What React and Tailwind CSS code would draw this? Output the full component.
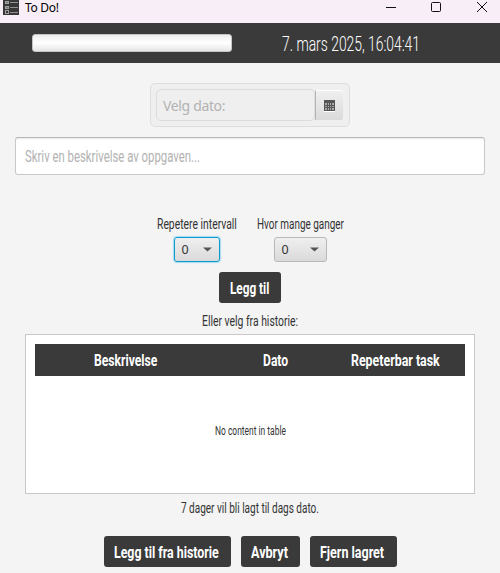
import { useLayoutEffect, useRef, useState } from 'react';

// Single line of narrow lettering, condensed horizontally to the given width.
function Narrow({ width, className = '', children }) {
  const ref = useRef(null);
  const [scale, setScale] = useState(1);
  useLayoutEffect(() => {
    const natural = ref.current.offsetWidth;
    if (natural) setScale(width / natural);
  }, [width, children]);
  return (
    <span className="-mb-px flex shrink-0 pt-px whitespace-nowrap" style={{ width }}>
      <span
        ref={ref}
        className={`block shrink-0 origin-left font-['Roboto',sans-serif] ${className}`}
        style={{ transform: `scaleX(${scale})` }}
      >
        {children}
      </span>
    </span>
  );
}

function DarkButton({ className, width, children }) {
  return (
    <button className={`flex h-[31px] items-center rounded-[3px] bg-[#3a3a3a] pl-[10.5px] text-white ${className}`}>
      <Narrow width={width} className="text-[16px] leading-[31px] font-bold">{children}</Narrow>
    </button>
  );
}

function Combo({ className }) {
  return (
    <div className={`flex items-center justify-between rounded-[3px] border bg-linear-to-b from-[#efefef] to-[#dadada] pr-[7px] pl-[7px] ${className}`}>
      <span className="pt-px font-['Noto_Sans',sans-serif] text-[12.5px] leading-none text-[#333]">0</span>
      <svg width="9" height="5" viewBox="0 0 9 5">
        <path d="M0 0.5H9L4.5 4.5Z" fill="#555" />
      </svg>
    </div>
  );
}

function AppIcon() {
  return (
    <svg width="16" height="16" viewBox="0 0 16 16" className="-mt-px">
      <rect width="16" height="16" fill="#383838" />
      <g fill="none" stroke="#a0a0a0">
        <rect x="2.5" y="2.5" width="3" height="2" fill="#777" />
        <rect x="2.5" y="7.5" width="3" height="2" fill="#777" />
        <rect x="2.5" y="11.5" width="3" height="3" />
        <path d="M7 3.5H15M7 8.5H15M7 13.5H15" stroke="#929292" />
      </g>
    </svg>
  );
}

function CalendarIcon() {
  return (
    <svg width="11" height="12" viewBox="0 0 11 12" shapeRendering="crispEdges">
      <rect width="11" height="11" fill="#555" />
      <rect y="11" width="11" height="1" fill="#fff" />
      <path d="M1 3h2v2h-2zM4 3h1v2h-1zM6 3h1v2h-1zM8 3h2v2h-2zM1 6h2v1h-2zM4 6h1v1h-1zM6 6h1v1h-1zM8 6h2v1h-2zM1 8h2v2h-2zM4 8h1v2h-1zM6 8h1v2h-1zM8 8h2v2h-2z" fill="#a8a8a8" />
    </svg>
  );
}

export default function App() {
  return (
    <div className="flex h-[573px] w-[500px] flex-col overflow-hidden bg-[#f4f4f4] font-['Noto_Sans',sans-serif]">
      <div className="flex h-[23px] shrink-0 items-start bg-[#f8eef7] pl-[3px]">
        <AppIcon />
        <span className="ml-[6px] text-[12px] leading-[15px] tracking-[-0.3px] text-black">To Do!</span>
        <svg width="104" height="14" viewBox="0 0 104 14" className="ml-auto mr-[10px]" fill="none" stroke="#111">
          <path d="M0 7.5H10" />
          <rect x="45.5" y="2.5" width="9" height="9" rx="1" />
          <path d="M91 2L101 12M101 2L91 12" />
        </svg>
      </div>

      <header className="flex h-10 shrink-0 items-center bg-[#3a3a3a] pl-8">
        <div className="h-[18px] w-[200px] rounded-[3px] border border-[#c4c4c4] bg-linear-to-b from-[#eee] via-white to-[#e6e6e6]" />
        <div className="ml-[50px] text-white">
          <Narrow width={138} className="text-[20.5px] leading-[38px] font-light">7. mars 2025, 16:04:41</Narrow>
        </div>
      </header>

      <main className="flex flex-col items-center pt-5">
        <div className="flex h-11 w-[200px] items-center rounded-[5px] border border-[#dedede] bg-[#efefef] pl-[5px]">
          <div className="flex h-8 w-[159px] items-center rounded-[5px] border border-[#dcdcdc] bg-[#efefef] pl-[6px] text-[14px] tracking-[-0.35px] text-[#b2b2b2]">
            Velg dato:
          </div>
          <div className="flex h-[30px] w-7 items-center justify-center rounded-r-[2px] border-t border-l border-t-white border-l-[#b5b5b5] bg-linear-to-b from-[#efefef] to-[#dadada]">
            <CalendarIcon />
          </div>
        </div>

        <div className="mt-[10px] h-[38px] w-[470px] rounded-[3px] border border-[#c8c8c8] border-t-[#b6b6b6] bg-white pl-[9px] text-[#b2b2b2] shadow-[inset_0_2px_2px_-1px_#e8e8e8]">
          <Narrow width={175} className="text-[16.5px] leading-[36px]">Skriv en beskrivelse av oppgaven...</Narrow>
        </div>

        <div className="mt-[39px] flex gap-5 text-[#333]">
          <div className="flex flex-col items-center">
            <Narrow width={80} className="text-[14.5px] leading-5">Repetere intervall</Narrow>
            <Combo className="mt-[3px] h-[25px] w-[46px] border-[#0b9bd0] shadow-[0_0_1px_1px_#a5dcf0]" />
          </div>
          <div className="flex flex-col items-center">
            <Narrow width={87} className="text-[14.5px] leading-5">Hvor mange ganger</Narrow>
            <Combo className="mt-[3px] h-[25px] w-[53px] border-[#b8b8b8]" />
          </div>
        </div>

        <DarkButton className="mt-[10px] w-[62px]" width={39}>Legg til</DarkButton>

        <div className="mt-2 text-[#333]">
          <Narrow width={96} className="text-[14.5px] leading-5">Eller velg fra historie:</Narrow>
        </div>

        <section className="mt-[3px] flex h-[160px] w-[450px] flex-col border border-[#c8c8c8] bg-white p-[9px]">
          <div className="grid h-8 grid-cols-[180px_120px_120px] justify-items-center bg-[#3a3a3a] text-white">
            <Narrow width={63} className="text-[16px] leading-8 font-bold">Beskrivelse</Narrow>
            <Narrow width={25} className="text-[16px] leading-8 font-bold">Dato</Narrow>
            <Narrow width={89} className="text-[16px] leading-8 font-bold">Repeterbar task</Narrow>
          </div>
          <div className="flex flex-1 items-center justify-center text-[#333]">
            <Narrow width={71} className="text-[12px] leading-4">No content in table</Narrow>
          </div>
        </section>

        <div className="mt-1 text-[#333]">
          <Narrow width={138} className="text-[14.5px] leading-5">7 dager vil bli lagt til dags dato.</Narrow>
        </div>

        <div className="mt-[18px] flex gap-[10px]">
          <DarkButton className="w-[127px]" width={105}>Legg til fra historie</DarkButton>
          <DarkButton className="w-[59px]" width={37}>Avbryt</DarkButton>
          <DarkButton className="w-[87px]" width={64}>Fjern lagret</DarkButton>
        </div>
      </main>
    </div>
  );
}
